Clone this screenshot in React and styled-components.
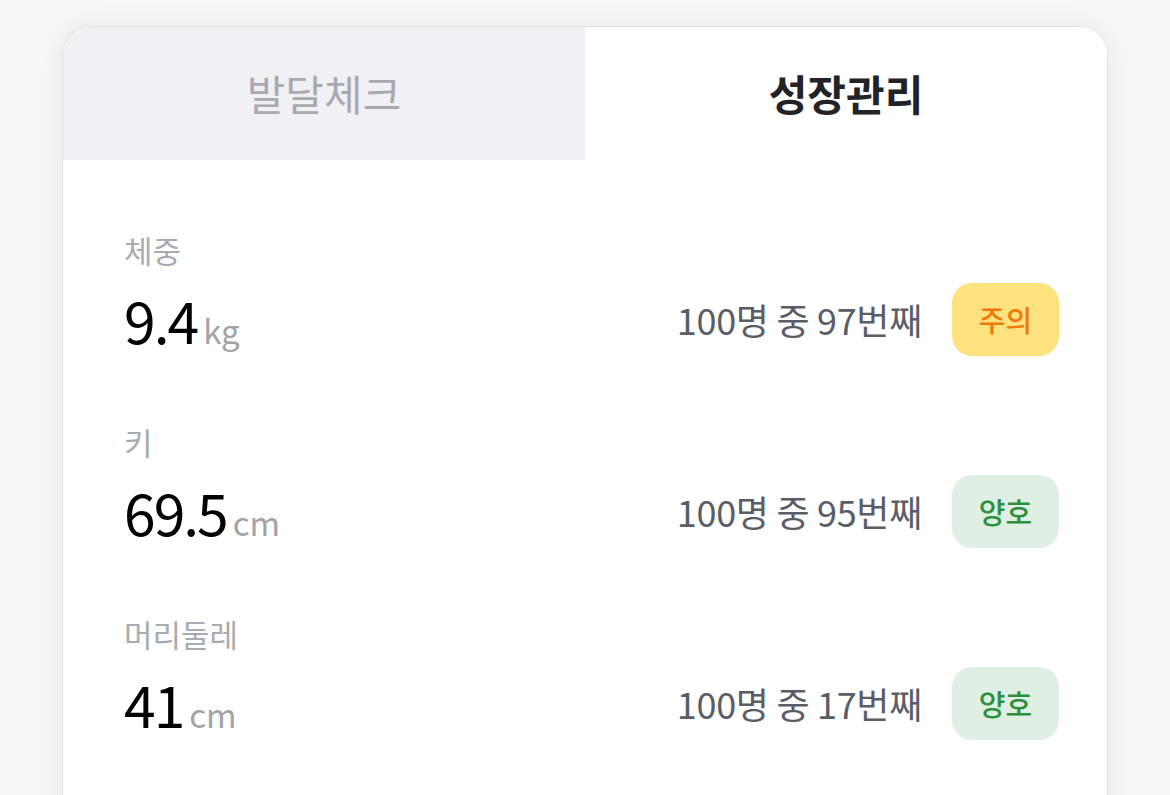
import React from "react";
import styled, { createGlobalStyle } from "styled-components";

const Global = createGlobalStyle`
  html, body { margin: 0; padding: 0; background: #f5f6f7; }
  body { font-family: "Noto Sans CJK KR", "Noto Sans", sans-serif; }
  * { box-sizing: border-box; }
`;

const Page = styled.div`
  padding: 26px 62px 0;
  height: 795px;
  overflow: hidden;
`;

const Card = styled.div`
  background: #fff;
  border: 1.5px solid #e0e1e3;
  border-bottom: none;
  border-radius: 28px 28px 0 0;
  box-shadow: 0 0 30px rgba(0, 0, 0, 0.06);
  overflow: hidden;
  min-height: 820px;
`;

const Tabs = styled.div`
  display: grid;
  grid-template-columns: 1fr 1fr;
  height: 133px;
`;

const Tab = styled.div`
  display: flex;
  align-items: center;
  justify-content: center;
  font-size: 42px;
  font-weight: ${(p) => (p.$active ? 700 : 400)};
  color: ${(p) => (p.$active ? "#222326" : "#a9aab0")};
  background: ${(p) => (p.$active ? "#fff" : "#f1f1f5")};
  padding-bottom: 2px;
`;

const List = styled.div`
  display: flex;
  flex-direction: column;
  gap: 63px;
  padding: 70px 48px 0 61px;
`;

const Row = styled.div`
  display: flex;
  flex-direction: column;
  gap: 9px;
`;

const Label = styled.div`
  font-size: 31px;
  line-height: 40px;
  color: #a8abb2;
`;

const Line = styled.div`
  display: flex;
  align-items: center;
  justify-content: space-between;
  height: 80px;
`;

const Value = styled.div`
  display: flex;
  align-items: baseline;
  gap: 6px;
  color: #000;
`;

const Num = styled.span`
  font-size: 57px;
  letter-spacing: -2px;
  line-height: 1;
`;

const Unit = styled.span`
  font-size: 33px;
  color: #a3a3a6;
  line-height: 1;
`;

const Right = styled.div`
  display: flex;
  align-items: center;
  gap: 30px;
`;

const Rank = styled.span`
  font-size: 36px;
  letter-spacing: -0.3px;
  color: #585d68;
`;

const Badge = styled.span`
  display: inline-flex;
  align-items: center;
  justify-content: center;
  width: 107px;
  height: 73px;
  border-radius: 20px;
  font-size: 29px;
  font-weight: 500;
  background: ${(p) => (p.$tone === "warn" ? "#fde27f" : "#dfefe3")};
  color: ${(p) => (p.$tone === "warn" ? "#ef7a0c" : "#2e8f3c")};
`;

const rows = [
  { label: "체중", num: "9.4", unit: "kg", rank: "100명 중 97번째", badge: "주의", tone: "warn" },
  { label: "키", num: "69.5", unit: "cm", rank: "100명 중 95번째", badge: "양호", tone: "good" },
  { label: "머리둘레", num: "41", unit: "cm", rank: "100명 중 17번째", badge: "양호", tone: "good" },
];

export default function App() {
  return (
    <>
      <Global />
      <Page>
        <Card>
          <Tabs>
            <Tab>발달체크</Tab>
            <Tab $active>성장관리</Tab>
          </Tabs>
          <List>
            {rows.map((r) => (
              <Row key={r.label}>
                <Label>{r.label}</Label>
                <Line>
                  <Value>
                    <Num>{r.num}</Num>
                    <Unit>{r.unit}</Unit>
                  </Value>
                  <Right>
                    <Rank>{r.rank}</Rank>
                    <Badge $tone={r.tone}>{r.badge}</Badge>
                  </Right>
                </Line>
              </Row>
            ))}
          </List>
        </Card>
      </Page>
    </>
  );
}
